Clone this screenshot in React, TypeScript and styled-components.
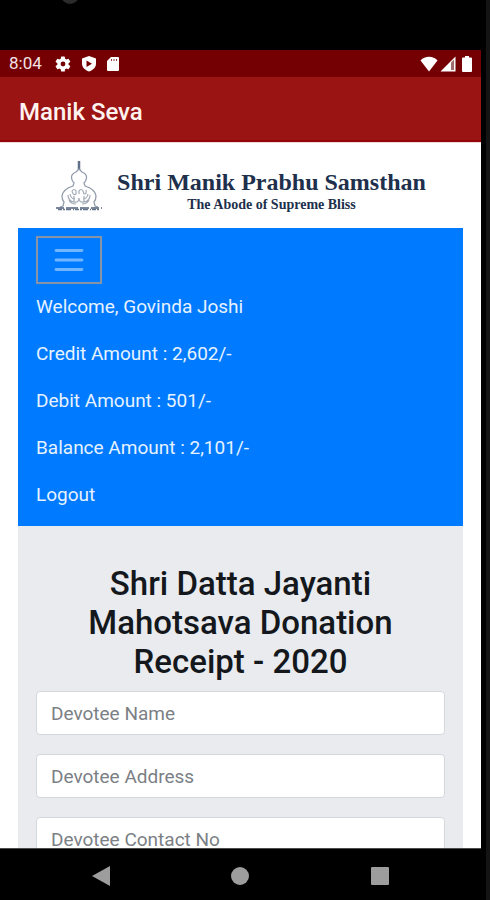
import React from "react";
import styled, { createGlobalStyle } from "styled-components";

const GlobalStyle = createGlobalStyle`
  * { box-sizing: border-box; }
  body { margin: 0; background: #000; font-family: Roboto, "Liberation Sans", sans-serif; }
`;

const Device = styled.div`
  display: flex;
  flex-direction: column;
  height: 100vh;
  padding-right: 5px;
  border-right: 4px solid #141414;
  background: #000;
`;

const Bezel = styled.div`
  flex: none;
  height: 50px;
  padding-left: 61px;
  overflow: hidden;
`;

const Camera = styled.div`
  width: 18px;
  height: 18px;
  margin-top: -14px;
  border-radius: 50%;
  background: #2b2b2b;
`;

const StatusBar = styled.div`
  flex: none;
  display: flex;
  align-items: center;
  justify-content: space-between;
  height: 27px;
  padding: 0 9px;
  background: #750004;
  color: #fff;
`;

const StatusGroup = styled.div<{ $gap: number }>`
  display: flex;
  align-items: center;
  gap: ${(p) => p.$gap}px;
`;

const Clock = styled.time`
  margin-right: 3px;
  font-size: 17px;
  line-height: 27px;
  color: #f3e3e3;
`;

const AppBar = styled.header`
  flex: none;
  display: flex;
  align-items: center;
  height: 65px;
  padding: 0 19px;
  border-bottom: 2px solid #930509;
  background: #9b1414;
`;

const AppTitle = styled.h1`
  margin: 0;
  padding-top: 6px;
  font-size: 24px;
  font-weight: 500;
  line-height: 28px;
  color: #fff3f0;
`;

const Page = styled.main`
  flex: 1;
  min-height: 0;
  overflow: hidden;
  padding: 0 18px;
  border-top: 1px solid #eddada;
  background: #fff;
`;

const Brand = styled.div`
  display: flex;
  justify-content: center;
  align-items: flex-start;
  gap: 14px;
  height: 85px;
  padding-top: 17px;
  color: #20304c;
`;

const BrandText = styled.div`
  padding-top: 8px;
  font-family: "Liberation Serif", serif;
  font-weight: 700;
  text-align: center;
`;

const BrandName = styled.div`
  font-size: 24px;
  line-height: 28px;
`;

const BrandTagline = styled.div`
  font-size: 14px;
  line-height: 18px;
`;

const Menu = styled.nav`
  padding: 8px 18px;
  background: #007bff;
`;

const Toggler = styled.button`
  display: flex;
  align-items: center;
  justify-content: center;
  width: 66px;
  height: 48px;
  padding: 0;
  border: 2px solid #8794a6;
  background: transparent;
  color: #71b5ff;
`;

const MenuList = styled.ul`
  margin: -1px 0 0;
  padding: 0;
  list-style: none;
`;

const MenuItem = styled.li`
  font-size: 19px;
  line-height: 47px;
  color: #e6f2ff;
`;

const MenuLink = styled.a`
  color: inherit;
  text-decoration: none;
`;

const Form = styled.form`
  display: flex;
  flex-direction: column;
  gap: 19px;
  padding: 38px 18px;
  background: #e9ebee;
`;

const FormTitle = styled.h2`
  margin: 0 0 -9px;
  font-size: 33px;
  font-weight: 500;
  line-height: 39px;
  text-align: center;
  color: #14181c;
`;

const Field = styled.input`
  width: 100%;
  height: 44px;
  padding: 0 14px;
  border: 1px solid #d3d8dd;
  border-radius: 4px;
  background: #fff;
  font-family: inherit;
  font-size: 19px;
  color: #495057;
  &::placeholder { color: #7b8085; opacity: 1; }
`;

const NavBar = styled.div`
  flex: none;
  display: flex;
  align-items: center;
  justify-content: center;
  height: 52px;
  padding-top: 3px;
  border-top: 1px solid #4b4b4b;
  background: #000;
`;

const NavButton = styled.button`
  display: flex;
  align-items: center;
  justify-content: center;
  width: 24px;
  height: 24px;
  padding: 0;
  border: 0;
  background: transparent;
  color: #9d9d9d;
`;

const NavGroup = styled.div`
  display: flex;
  justify-content: space-between;
  width: 63%;
`;

const GearIcon = () => (
  <svg width="18" height="18" viewBox="0 0 24 24" fill="currentColor" aria-hidden="true">
    <path d="M19.4 13a7.8 7.8 0 0 0 0-2l2.1-1.6a.5.5 0 0 0 .1-.7l-2-3.4a.5.5 0 0 0-.6-.2l-2.5 1a7.300 7.300 0 0 0-1.700-1l-.4-2.600a.5.5 0 0 0-.5-.5h-4a.5.5 0 0 0-.5.5L9 5.100a7.700 7.700 0 0 0-1.700 1l-2.500-1a.5.5 0 0 0-.6.200l-2 3.400a.5.5 0 0 0 .1.700L4.500 11a7.800 7.800 0 0 0 0 2l-2.200 1.600a.5.5 0 0 0-.1.700l2 3.400c.1.200.4.300.6.200l2.500-1a7.300 7.300 0 0 0 1.700 1l.4 2.600c0 .3.300.5.500.5h4c.3 0 .5-.2.500-.5l.4-2.600a7.700 7.700 0 0 0 1.700-1l2.500 1c.2.100.5 0 .6-.2l2-3.400a.5.5 0 0 0-.1-.7zM12 15.200a3.200 3.200 0 1 1 0-6.400 3.200 3.200 0 0 1 0 6.400z" />
  </svg>
);

const ShieldIcon = () => (
  <svg width="16" height="18" viewBox="0 0 16 18" aria-hidden="true">
    <path d="M8 1l7 2.500v5c0 4-3 6.500-7 8-4-1.500-7-4-7-8v-5z" fill="currentColor" />
    <path d="M5.500 5.500l5.500 3.300-5.500 3.300z" fill="#750004" />
  </svg>
);

const CardIcon = () => (
  <svg width="14" height="16" viewBox="0 0 14 16" aria-hidden="true">
    <path d="M5 1h7q1 0 1 1v12q0 1-1 1H2q-1 0-1-1V5z" fill="currentColor" />
    <path d="M5.500 3v2M8 3v2M10.500 3v2" stroke="#8f3a3d" strokeWidth="1" />
  </svg>
);

const WifiIcon = () => (
  <svg width="18" height="16" viewBox="0 0 18 16" fill="currentColor" aria-hidden="true">
    <path d="M9 15.500L.5 4.500Q4 .8 9 .8t8.500 3.700z" />
  </svg>
);

const SignalIcon = () => (
  <svg width="16" height="16" viewBox="0 0 16 16" aria-hidden="true">
    <path d="M15.500.5v15H.5z" fill="currentColor" />
    <path d="M11 6.500l3-3v10.500h-3z" fill="#a0696b" />
  </svg>
);

const BatteryIcon = () => (
  <svg width="10" height="16" viewBox="0 0 10 16" fill="currentColor" aria-hidden="true">
    <path d="M3 0h4v1.500h2q1 0 1 1V15q0 1-1 1H1q-1 0-1-1V2.500q0-1 1-1h2z" />
  </svg>
);

const TempleLogo = () => (
  <svg width="48" height="52" viewBox="0 0 48 52" fill="none" role="img" aria-label="Temple">
    <path d="M24 1v9" stroke="#60708a" strokeWidth="2.500" />
    <path
      d="M24 9l-3 3q-5 2-4.500 6 .5 3 2.500 5l-1 3q-10 3-11 10 0 4 2 6l-1 4-3 1M24 9l3 3q5 2 4.500 6-.5 3-2.500 5l1 3q10 3 11 10 0 4-2 6l1 4 3 1"
      stroke="#929cab"
      strokeWidth="1.300"
    />
    <path
      d="M17 31q2-3 4 0v3q-3 2-4-3m7 3v-3q2-3 4 0l1 3q3 0 2-4M13 35q0 6 6 7 5 1 5-4 0 5 5 4 6-1 6-7M15 34q1 5 5 5m8 0q4 0 5-5M14 40q2 4 7 4M27 44q5 0 7-4M19 36v6m10-6v6"
      stroke="#a2aab6"
      strokeWidth="1.200"
    />
    <path d="M1 48h46" stroke="#50617b" strokeWidth="1.300" strokeDasharray="8 2 12 2 9 2" />
    <path d="M3 49.500h42" stroke="#66758c" strokeWidth="1.600" strokeDasharray="4 1 2 1 5 2 1 1" />
  </svg>
);

const MenuIcon = () => (
  <svg width="30" height="24" viewBox="0 0 30 24" stroke="currentColor" strokeWidth="2.800" strokeLinecap="round" aria-hidden="true">
    <path d="M2 2.500h26M2 12h26M2 21.500h26" />
  </svg>
);

const accountLines = [
  "Welcome, Govinda Joshi",
  "Credit Amount : 2,602/-",
  "Debit Amount : 501/-",
  "Balance Amount : 2,101/-",
];

const fields = [
  { name: "name", label: "Devotee Name", type: "text" },
  { name: "address", label: "Devotee Address", type: "text" },
  { name: "contact", label: "Devotee Contact No", type: "tel" },
];

export default function App() {
  return (
    <>
      <GlobalStyle />
      <Device>
        <Bezel>
          <Camera />
        </Bezel>
        <StatusBar>
          <StatusGroup $gap={9}>
            <Clock>8:04</Clock>
            <GearIcon />
            <ShieldIcon />
            <CardIcon />
          </StatusGroup>
          <StatusGroup $gap={6}>
            <StatusGroup $gap={2}>
              <WifiIcon />
              <SignalIcon />
            </StatusGroup>
            <BatteryIcon />
          </StatusGroup>
        </StatusBar>
        <AppBar>
          <AppTitle>Manik Seva</AppTitle>
        </AppBar>
        <Page>
          <Brand>
            <TempleLogo />
            <BrandText>
              <BrandName>Shri Manik Prabhu Samsthan</BrandName>
              <BrandTagline>The Abode of Supreme Bliss</BrandTagline>
            </BrandText>
          </Brand>
          <Menu aria-label="Account">
            <Toggler type="button" aria-label="Toggle navigation" aria-expanded="true">
              <MenuIcon />
            </Toggler>
            <MenuList>
              {accountLines.map((line) => (
                <MenuItem key={line}>{line}</MenuItem>
              ))}
              <MenuItem>
                <MenuLink href="#logout">Logout</MenuLink>
              </MenuItem>
            </MenuList>
          </Menu>
          <Form>
            <FormTitle>Shri Datta Jayanti Mahotsava Donation Receipt - 2020</FormTitle>
            {fields.map((field) => (
              <Field key={field.name} name={field.name} type={field.type} placeholder={field.label} aria-label={field.label} />
            ))}
          </Form>
        </Page>
        <NavBar>
          <NavGroup>
            <NavButton type="button" aria-label="Back">
              <svg width="18" height="20" viewBox="0 0 18 20" fill="currentColor">
                <path d="M18 0v20L0 10z" />
              </svg>
            </NavButton>
            <NavButton type="button" aria-label="Home">
              <svg width="18" height="18" viewBox="0 0 18 18" fill="currentColor">
                <circle cx="9" cy="9" r="9" />
              </svg>
            </NavButton>
            <NavButton type="button" aria-label="Recent apps">
              <svg width="18" height="18" viewBox="0 0 18 18" fill="currentColor">
                <rect width="18" height="18" rx="1" />
              </svg>
            </NavButton>
          </NavGroup>
        </NavBar>
      </Device>
    </>
  );
}
